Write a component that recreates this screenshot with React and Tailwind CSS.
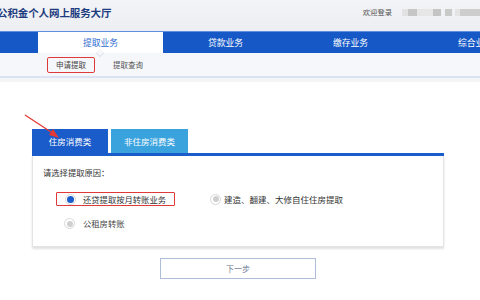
import React from "react";

const font = { fontFamily: '"Noto Sans CJK SC", "Noto Sans", sans-serif' };

function Radio({ checked }) {
  return (
    <span className="flex h-[11px] w-[11px] items-center justify-center rounded-full border border-[#d8d8d8] bg-white">
      <span className={checked ? "h-[7px] w-[7px] rounded-full bg-[#1a5ccc]" : "h-[6px] w-[6px] rounded-full bg-[#cfcfcf]"} />
    </span>
  );
}

export default function App() {
  return (
    <div className="relative h-[300px] w-[480px] overflow-hidden bg-white" style={font}>
      {/* header */}
      <div className="flex h-[31px] items-center justify-between bg-gradient-to-b from-[#f3f4f6] to-[#eceef2]">
        <div className="ml-[-3px] mt-[-4px] text-[10.5px] font-bold leading-none tracking-[-0.1px] text-[#1d3c80]">
          公积金个人网上服务大厅
        </div>
        <div className="mt-[-6px] flex items-center">
          <span className="text-[7.3px] leading-none text-[#555]">欢迎登录</span>
          <span className="ml-[10px] h-[7px] w-[6px] bg-[#e2e2e2]" />
          <span className="h-[7px] w-[9px] bg-[#c6c6c6]" />
          <span className="h-[7px] w-[16px] bg-[#e6e6e6]" />
          <span className="h-[7px] w-[8px] bg-[#c4c4c4]" />
          <span className="ml-[4px] h-[7px] w-[7px] bg-[#c9c9c9]" />
          <span className="ml-[3px] h-[7px] w-[5px] bg-[#e4e4e4]" />
          <span className="h-[7px] w-[20px] bg-[#cdcdcd]" />
        </div>
      </div>
      {/* nav */}
      <div className="flex h-[22px] border-t border-[#5f8fe0] bg-[#1558c6] pl-[38px]">
        <div className="relative flex w-[125px] shrink-0 items-center justify-center bg-white text-[8.8px] text-[#2f6bd0]">
          提取业务
          <span className="absolute bottom-[-3px] left-[59px] h-[6px] w-[6px] rotate-45 border-b border-r border-[#dfe4ee] bg-[#f6f7fa]" />
        </div>
        <div className="flex w-[125px] shrink-0 items-center justify-center text-[8.8px] text-white">贷款业务</div>
        <div className="flex w-[125px] shrink-0 items-center justify-center text-[8.8px] text-white">缴存业务</div>
        <div className="flex w-[125px] shrink-0 items-center justify-center text-[8.8px] text-white">综合业务</div>
      </div>
      {/* subnav */}
      <div className="flex h-[25px] items-center border-b-2 border-[#dbe3f3] bg-[#f6f7fa] pl-[47px]">
        <div className="flex h-[16px] w-[48px] items-center justify-center rounded-[2px] border-[1.5px] border-[#e0393a] text-[7.5px] text-[#444]">
          申请提取
        </div>
        <div className="ml-[18px] text-[7.5px] text-[#555]">提取查询</div>
      </div>
      <div className="h-[4px] bg-[#f4f5f7]" />

      {/* content */}
      <div className="ml-[32px] mt-[47px] w-[412px]">
        <div className="flex h-[24px] gap-[3px]">
          <div className="flex w-[76px] items-center justify-center bg-[#1a5cc9] text-[8.5px] text-white">住房消费类</div>
          <div className="flex w-[77px] items-center justify-center bg-[#3aa3de] text-[8.5px] text-white">非住房消费类</div>
        </div>
        <div className="h-[3px] bg-[#1a5cc9]" />
        <div className="h-[91px] border-x border-b border-[#e4e4e4] shadow-[0_2px_2px_rgba(0,0,0,0.12)] pl-[10px] pt-[10px]">
          <div className="text-[8.3px] leading-[12px] text-[#333]">请选择提取原因：</div>
          <div className="mt-[14px] flex items-center">
            <div className="ml-[13px] flex h-[14px] w-[119px] items-center rounded-[1px] border-[1.5px] border-[#e0393a] pl-[8px]">
              <Radio checked />
              <span className="ml-[7px] text-[8.3px] leading-none text-[#333]">还贷提取按月转账业务</span>
            </div>
            <div className="ml-[35px] flex items-center">
              <Radio />
              <span className="ml-[3px] text-[8.5px] leading-none text-[#333]">建造、翻建、大修自住住房提取</span>
            </div>
          </div>
          <div className="ml-[21px] mt-[12px] flex items-center">
            <Radio />
            <span className="ml-[8px] text-[8.3px] leading-none text-[#444]">公租房转账</span>
          </div>
        </div>
        <div className="mt-[11px] flex justify-center">
          <div className="flex h-[21px] w-[156px] items-center justify-center border border-[#aebdd9] text-[8px] text-[#6a7690]">
            下一步
          </div>
        </div>
      </div>

      {/* red arrow */}
      <svg className="absolute left-0 top-0" width="480" height="300" viewBox="0 0 480 300">
        <line x1="25" y1="115" x2="54" y2="134" stroke="#e53935" strokeWidth="1.3" />
        <polygon points="59,138 49,135 53,129" fill="#e53935" />
      </svg>
    </div>
  );
}
